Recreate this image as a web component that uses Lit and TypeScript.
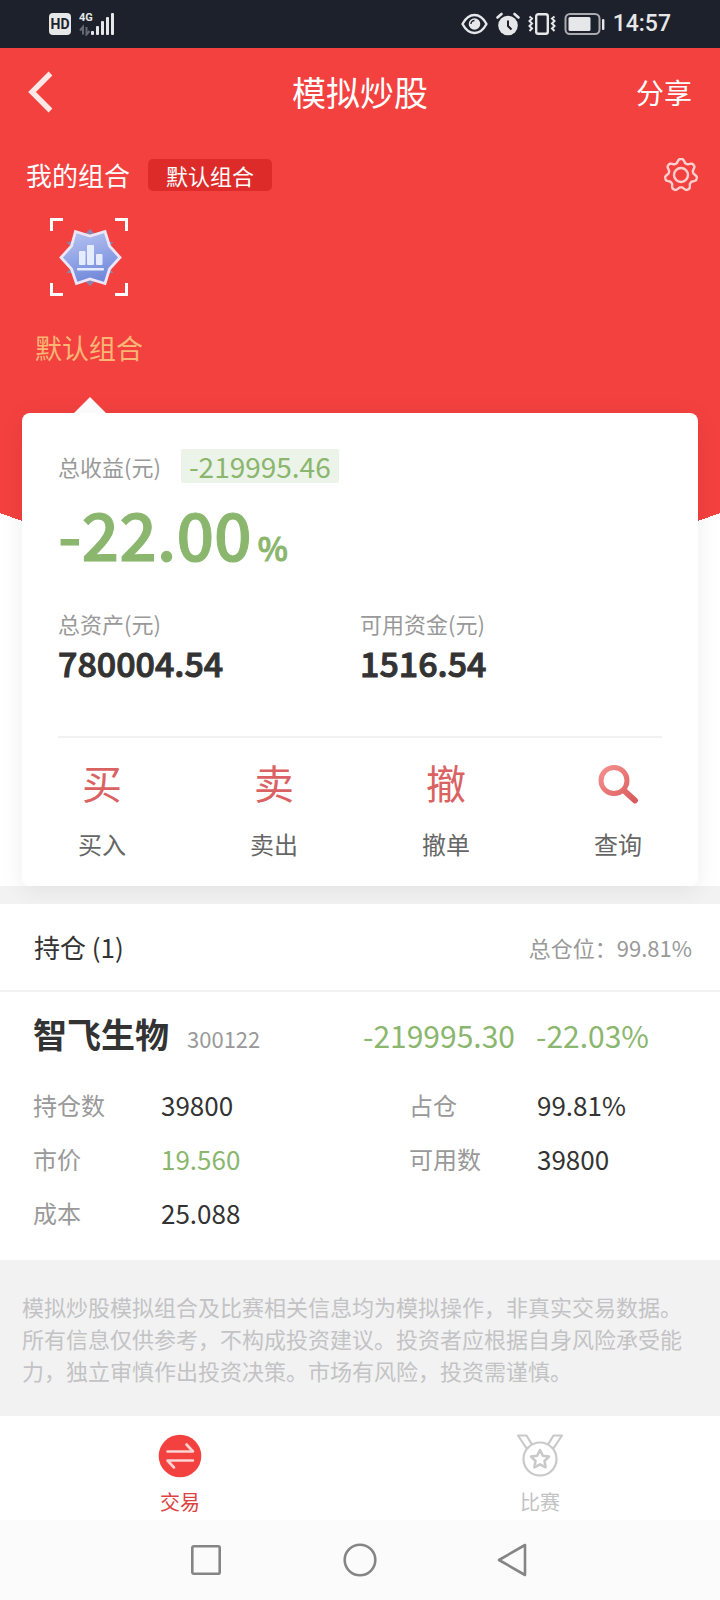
import { LitElement, html, css, svg } from "lit";
import { customElement, state } from "lit/decorators.js";

const eyeIcon = svg`<svg width="27" height="22" viewBox="0 0 27 22" aria-hidden="true">
  <path d="M1.500 11C5 4.500 9 2 13.500 2S22 4.500 25.500 11C22 17.500 18 20 13.500 20S5 17.500 1.500 11Z" fill="none" stroke="#e6e7e9" stroke-width="2.400" stroke-linejoin="round"/>
  <circle cx="13.500" cy="11" r="5.800" fill="#e6e7e9"/>
  <path d="M10 11a3.500 3.500 0 0 1 3.500-3.500" fill="none" stroke="#1d212b" stroke-width="1.400"/>
</svg>`;

const alarmIcon = svg`<svg width="24" height="24" viewBox="0 0 24 24" aria-hidden="true">
  <circle cx="12" cy="13.500" r="9.800" fill="#e6e7e9"/>
  <path d="M1.500 5.500 5.500 2M22.500 5.500 18.500 2" stroke="#e6e7e9" stroke-width="2.600" stroke-linecap="round"/>
  <path d="M12 8.500v5.500l3.500 3.500" fill="none" stroke="#1d212b" stroke-width="2"/>
</svg>`;

const vibrateIcon = svg`<svg width="28" height="24" viewBox="0 0 28 24" fill="none" stroke="#e6e7e9" aria-hidden="true">
  <rect x="8.200" y="2.200" width="11.600" height="19.600" rx="2" stroke-width="2.400"/>
  <path d="M1.500 4.500l2.500 2-2.500 2.500 2.500 2.500-2.500 2.500 2.500 2.500-2.500 2.500M26.500 4.500l-2.500 2 2.500 2.500-2.500 2.500 2.500 2.500-2.500 2.500 2.500 2.500" stroke-width="2"/>
</svg>`;

const batteryIcon = svg`<svg width="41" height="24" viewBox="0 0 41 24" aria-hidden="true">
  <rect x="1.500" y="2" width="34" height="20" rx="4.500" fill="none" stroke="#a9abb0" stroke-width="2"/>
  <rect x="4.500" y="5" width="22" height="14" rx="1.500" fill="#e6e7e9"/>
  <rect x="38" y="7" width="2.400" height="11" rx="1" fill="#e6e7e9"/>
</svg>`;

const signalIcon = svg`<svg width="36" height="24" viewBox="0 0 36 24" aria-hidden="true">
  <g stroke="#666a73" stroke-width="2" fill="none"><path d="M4 22.500v-7.500l-3 3.500M7.500 15v7.500l3-3.500"/></g>
  <g fill="#e6e7e9"><rect x="12" y="19" width="3" height="4" rx="1"/><rect x="17" y="14" width="3" height="9" rx="1"/><rect x="22" y="9" width="3" height="14" rx="1"/><rect x="27" y="5" width="3" height="18" rx="1"/><rect x="32" y="1" width="3" height="22" rx="1"/></g>
</svg>`;

const backIcon = svg`<svg width="26" height="42" viewBox="0 0 26 42" aria-hidden="true">
  <path d="M22.500 2.500 4 21l18.500 18.500" fill="none" stroke="#fff" stroke-opacity=".88" stroke-width="5.400"/>
</svg>`;

/* Outline of a seven-toothed gear: the radius follows a flattened cosine. */
const gearOutline = Array.from({ length: 168 }, (_, i) => {
  const angle = (i / 168) * Math.PI * 2;
  const wave = Math.max(-1, Math.min(1, 1.3 * Math.cos(7 * angle)));
  const radius = 14.2 + 1.800 * wave;
  const x = 17 + radius * Math.sin(angle);
  const y = 17 - radius * Math.cos(angle);
  return `${x.toFixed(2)},${y.toFixed(2)}`;
}).join(" ");

const gearIcon = svg`<svg width="34" height="34" viewBox="0 0 34 34" fill="none" stroke="#fbd0cf" stroke-width="2.400" stroke-linejoin="round" aria-hidden="true">
  <polygon points=${gearOutline}/>
  <circle cx="17" cy="17" r="7"/>
</svg>`;

const portfolioIcon = svg`<svg width="78" height="78" viewBox="0 0 78 78" aria-hidden="true">
  <defs>
    <linearGradient id="gem" x1="0.300" y1="0" x2="0.600" y2="1"><stop offset="0" stop-color="#b3c1f0"/><stop offset="1" stop-color="#6e86da"/></linearGradient>
  </defs>
  <path d="M1.500 13V1.500H13M65 1.500H76.500V13M76.500 65V76.500H65M13 76.500H1.500V65" fill="none" stroke="#fff" stroke-width="3"/>
  <path d="M40 11l6 6h-12zM40 68l6-6h-12zM16.500 24h9v10zM63.500 24h-9v10zM16.500 55h9v-10zM63.500 55h-9v-10z" fill="#8d83ad"/>
  <path d="M25.500 13.500 40 18 55 13.500 59.500 28 70 39.500 59.500 51 55 65.500 40 61 26.500 65.500 21.500 51 11 39.500 21.500 28Z" fill="url(#gem)" stroke="#ece6f8" stroke-width="2.800"/>
  <g fill="#e6ecff"><rect x="29" y="33" width="6.500" height="14" rx="1"/><rect x="37" y="27" width="7" height="20" rx="1"/><rect x="46" y="36" width="6.500" height="11" rx="1"/><rect x="27" y="50" width="27" height="2.400" rx="1"/></g>
</svg>`;

const searchIcon = svg`<svg width="48" height="48" viewBox="0 0 48 48" fill="none" aria-hidden="true">
  <defs><linearGradient id="lens" gradientUnits="userSpaceOnUse" x1="8" y1="8" x2="42" y2="44"><stop offset="0" stop-color="#f58f8f"/><stop offset="1" stop-color="#d85a5a"/></linearGradient></defs>
  <g stroke="url(#lens)"><circle cx="20" cy="22.500" r="13" stroke-width="5"/><path d="M30 32.500 41 42.500" stroke-width="5.800" stroke-linecap="round"/></g>
</svg>`;

const tradeIcon = svg`<svg width="48" height="48" viewBox="0 0 48 48" aria-hidden="true">
  <circle cx="24" cy="24" r="21.300" fill="#f3413f"/>
  <path d="M11.500 19.500H37L30.500 12.500M37 28.500H11.500L18 35.500" fill="none" stroke="#fcd3d2" stroke-width="2.600" stroke-linecap="round" stroke-linejoin="round"/>
</svg>`;

const medalIcon = svg`<svg width="48" height="48" viewBox="0 0 48 48" fill="none" stroke="#c9c9c9" stroke-width="2.200" stroke-linejoin="round" aria-hidden="true">
  <circle cx="24" cy="27" r="16.500"/>
  <path d="M11 17 2 3.500H10.500L16 12.500M37 17 46 3.500H37.500L32 12.500"/>
  <path d="M24 18 26.800 23.700 33 24.600 28.500 29 29.600 35.300 24 32.400 18.400 35.300 19.500 29 15 24.600 21.200 23.700Z" stroke-width="2.600"/>
</svg>`;

interface Action { glyph: string; label: string; }
interface Field { label: string; value: string; down?: boolean; }

const ACTIONS: Action[] = [
  { glyph: "买", label: "买入" },
  { glyph: "卖", label: "卖出" },
  { glyph: "撤", label: "撤单" },
  { glyph: "", label: "查询" },
];

const FIELDS: Field[] = [
  { label: "持仓数", value: "39800" },
  { label: "占仓", value: "99.81%" },
  { label: "市价", value: "19.560", down: true },
  { label: "可用数", value: "39800" },
  { label: "成本", value: "25.088" },
];

@customElement("app-root")
export class AppRoot extends LitElement {
  @state() private tab = "trade";

  static styles = css`
    :host {
      display: block;
      background: #fff;
      color: #333;
      font-family: "Noto Sans CJK SC", "Noto Sans", sans-serif;
      font-size: 22px;
      line-height: 32px;
    }
    * { box-sizing: border-box; }
    h1, h2, h3, p, dl, dd { margin: 0; font-weight: 400; }
    svg { display: block; flex: none; }
    button {
      font: inherit;
      color: inherit;
      background: none;
      border: 0;
      padding: 0;
      cursor: pointer;
    }
    a { color: inherit; text-decoration: none; }

    .status {
      display: flex;
      justify-content: space-between;
      align-items: center;
      height: 48px;
      padding: 0 49px;
      background: #1d212b;
      color: #e6e7e9;
      font-family: Roboto, sans-serif;
    }
    .status-side { display: flex; align-items: center; gap: 8px; }
    .hd {
      width: 22px;
      height: 22px;
      border-radius: 4px;
      background: #e6e7e9;
      color: #1d212b;
      font-size: 14px;
      font-weight: 700;
      line-height: 22px;
      text-align: center;
    }
    .signal { position: relative; }
    .net {
      position: absolute;
      left: 0;
      top: 0;
      font-size: 11px;
      font-weight: 700;
      line-height: 12px;
    }
    .time { font-size: 23px; font-weight: 500; }

    .hero {
      --red: #f3413f;
      background:
        linear-gradient(var(--red), var(--red)) 0 0 / 100% 465px no-repeat,
        linear-gradient(to top right, transparent 50%, var(--red) 50%) 0 465px / 50% 131px no-repeat,
        linear-gradient(to top left, transparent 50%, var(--red) 50%) 100% 465px / 50% 131px no-repeat;
      overflow: hidden;
    }
    .navbar {
      display: grid;
      grid-template-columns: 1fr auto 1fr;
      align-items: center;
      height: 88px;
      padding: 0 28px;
      color: #fff;
    }
    .navbar h1 { font-size: 34px; line-height: 48px; }
    .share { justify-self: end; font-size: 28px; line-height: 40px; }
    .portfolio-head {
      display: flex;
      align-items: center;
      gap: 18px;
      padding: 22px 22px 0 26px;
      color: #fff;
    }
    .portfolio-head h2 { font-size: 26px; }
    .tag {
      padding: 0 18px;
      border-radius: 5px;
      background: #dd2b29;
    }
    .gear { margin-left: auto; }
    .portfolio {
      display: flex;
      flex-direction: column;
      align-items: center;
      gap: 32px;
      margin: 26px 0 0 35px;
      color: #fbb675;
      font-size: 27px;
      line-height: 40px;
    }
    .pointer {
      width: 32px;
      height: 16px;
      margin: 29px 0 0 74px;
      background: #fff;
      clip-path: polygon(50% 0, 100% 100%, 0 100%);
    }
    .card {
      position: relative;
      margin: 0 22px;
      padding: 36px 36px 26px;
      border-radius: 8px;
      background: #fff;
      box-shadow: 0 4px 24px rgba(0, 0, 0, 0.07);
    }
    .muted { color: #999; }
    .down { color: #8ab66e; }
    .income { display: flex; align-items: center; gap: 20px; }
    .amount {
      padding: 0 8px;
      border-radius: 2px;
      background: #ecf3e8;
      font-size: 28px;
      line-height: 34px;
    }
    .rate {
      display: flex;
      align-items: baseline;
      gap: 6px;
      margin-top: 13px;
      font-size: 66px;
      font-weight: 500;
      line-height: 72px;
      -webkit-text-stroke: 1px currentColor;
    }
    .rate small { font-size: 32px; line-height: 32px; }
    .assets { display: grid; grid-template-columns: 1fr 1fr; margin-top: 39px; }
    .assets dd {
      font-size: 34px;
      font-weight: 500;
      line-height: 48px;
      -webkit-text-stroke: 1px currentColor;
    }
    .actions {
      display: flex;
      justify-content: space-between;
      margin-top: 49px;
      padding: 20px 20px 0;
      border-top: 2px solid #f2f2f2;
    }
    .action {
      display: flex;
      flex-direction: column;
      align-items: center;
      gap: 22px;
      width: 48px;
      color: #666;
      font-size: 24px;
      line-height: 32px;
    }
    .glyph { color: #da6262; font-size: 40px; line-height: 48px; }
    .strip { height: 18px; background: #f2f2f2; }

    .hold-head {
      display: flex;
      justify-content: space-between;
      align-items: center;
      height: 88px;
      padding: 0 28px 0 34px;
      border-bottom: 2px solid #f2f2f2;
    }
    .hold-head h2 { font-size: 26px; }
    .holding { padding: 17px 33px 20px; }
    .stock {
      display: grid;
      grid-template-columns: 330fr 173fr 151fr;
      align-items: baseline;
      font-size: 30px;
      line-height: 50px;
    }
    .name { display: flex; align-items: baseline; gap: 18px; }
    .name h3 { font-size: 34px; font-weight: 700; }
    .code { font-size: 22px; }
    .fields {
      display: grid;
      grid-template-columns: 376fr 278fr;
      margin-top: 15px;
      line-height: 54px;
    }
    .field { display: grid; grid-template-columns: 128px 1fr; }
    .field dt { font-size: 24px; }
    .field dd { font-size: 26px; }

    .disclaimer { padding: 30px 22px; background: #f2f2f2; color: #c3c3c5; }
    .tabs { display: grid; grid-template-columns: 1fr 1fr; height: 104px; }
    .tab {
      display: flex;
      flex-direction: column;
      align-items: center;
      gap: 8px;
      padding-top: 16px;
      color: #c3c3c3;
      font-size: 20px;
      line-height: 28px;
    }
    .tab.active { color: #dc4240; }
    .system {
      display: flex;
      justify-content: center;
      align-items: center;
      gap: 120px;
      height: 80px;
      background: #fbfbfb;
    }
  `;

  private pick(name: string) {
    return (e: Event) => {
      e.preventDefault();
      this.tab = name;
    };
  }

  private tabLink(name: string, label: string, icon: unknown) {
    return html`<a class="tab ${this.tab === name ? "active" : ""}" href="#${name}" @click=${this.pick(name)}>${icon}<span>${label}</span></a>`;
  }

  render() {
    return html`
      <div class="status">
        <div class="status-side">
          <span class="hd">HD</span>
          <span class="signal"><span class="net">4G</span>${signalIcon}</span>
        </div>
        <div class="status-side">${eyeIcon}${alarmIcon}${vibrateIcon}${batteryIcon}<span class="time">14:57</span></div>
      </div>

      <div class="hero">
        <header class="navbar">
          <button aria-label="返回">${backIcon}</button>
          <h1>模拟炒股</h1>
          <button class="share">分享</button>
        </header>
        <div class="portfolio-head">
          <h2>我的组合</h2>
          <span class="tag">默认组合</span>
          <button class="gear" aria-label="设置">${gearIcon}</button>
        </div>
        <button class="portfolio">${portfolioIcon}<span>默认组合</span></button>
        <div class="pointer"></div>

        <section class="card">
          <div class="income">
            <span class="muted">总收益(元)</span>
            <span class="amount down">-219995.46</span>
          </div>
          <div class="rate down"><span>-22.00</span><small>%</small></div>
          <dl class="assets">
            <div><dt class="muted">总资产(元)</dt><dd>780004.54</dd></div>
            <div><dt class="muted">可用资金(元)</dt><dd>1516.54</dd></div>
          </dl>
          <div class="actions">
            ${ACTIONS.map((a) => html`
              <button class="action">
                ${a.glyph ? html`<span class="glyph" aria-hidden="true">${a.glyph}</span>` : searchIcon}
                <span>${a.label}</span>
              </button>`)}
          </div>
        </section>
        <div class="strip"></div>
      </div>

      <section>
        <div class="hold-head">
          <h2>持仓 (1)</h2>
          <span class="muted">总仓位：99.81%</span>
        </div>
        <article class="holding">
          <div class="stock">
            <div class="name"><h3>智飞生物</h3><span class="code muted">300122</span></div>
            <span class="down">-219995.30</span>
            <span class="down">-22.03%</span>
          </div>
          <dl class="fields">
            ${FIELDS.map((f) => html`
              <div class="field"><dt class="muted">${f.label}</dt><dd class=${f.down ? "down" : ""}>${f.value}</dd></div>`)}
          </dl>
        </article>
      </section>

      <p class="disclaimer">模拟炒股模拟组合及比赛相关信息均为模拟操作，非真实交易数据。所有信息仅供参考，不构成投资建议。投资者应根据自身风险承受能力，独立审慎作出投资决策。市场有风险，投资需谨慎。</p>

      <nav class="tabs">
        ${this.tabLink("trade", "交易", tradeIcon)}
        ${this.tabLink("match", "比赛", medalIcon)}
      </nav>

      <div class="system">
        <button aria-label="最近任务"><svg width="34" height="34" viewBox="0 0 34 34" fill="none" stroke="#858585" stroke-width="2.600"><rect x="3.300" y="3.300" width="27.400" height="27.400" rx="1.500"/></svg></button>
        <button aria-label="主屏幕"><svg width="34" height="34" viewBox="0 0 34 34" fill="none" stroke="#858585" stroke-width="2.600"><circle cx="17" cy="17" r="15.300"/></svg></button>
        <button aria-label="后退"><svg width="34" height="34" viewBox="0 0 34 34" fill="none" stroke="#858585" stroke-width="2.600" stroke-linejoin="round"><path d="M28 2V32L2 17Z"/></svg></button>
      </div>
    `;
  }
}
